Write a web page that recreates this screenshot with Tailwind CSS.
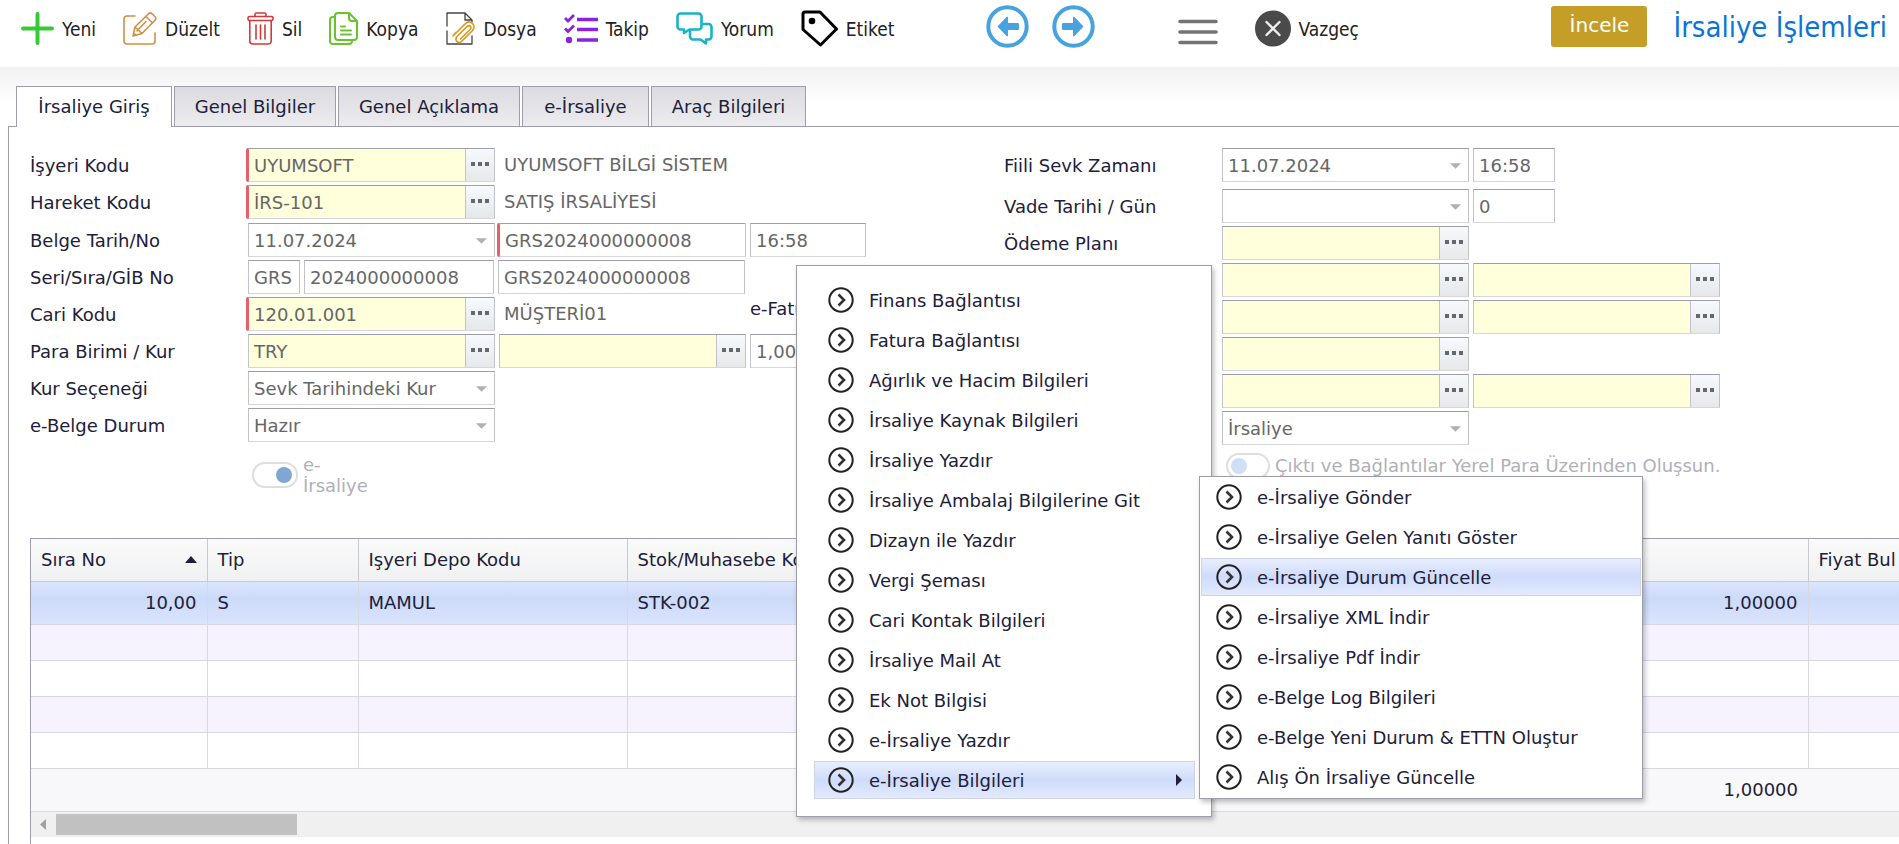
<!DOCTYPE html>
<html lang="tr">
<head>
  <meta charset="utf-8">
  <meta name="viewport" content="width=device-width, initial-scale=1">
  <title>İrsaliye İşlemleri</title>
  <script src="https://cdn.jsdelivr.net/npm/@tailwindcss/browser@4"></script>
</head>
<body class="bg-white font-['DejaVu_Sans',sans-serif] text-lg leading-6 text-[#20203a] overflow-x-hidden">

  <!-- shared icons -->
  <svg class="hidden" xmlns="http://www.w3.org/2000/svg">
    <symbol id="go" viewBox="0 0 26 26">
      <circle cx="13" cy="13" r="11.7" fill="none" stroke="#222" stroke-width="2"/>
      <path d="M10.5 7.5l5.5 5.5-5.5 5.5" fill="none" stroke="#333" stroke-width="2.6"/>
    </symbol>
    <symbol id="dots" viewBox="0 0 18 4">
      <path d="M0 0h4v4H0zM7 0h4v4H7zM14 0h4v4h-4z" fill="#62686f"/>
    </symbol>
    <symbol id="caret" viewBox="0 0 12 6">
      <path d="M0 0h12L6 6z" fill="#b0b0b6"/>
    </symbol>
  </svg>

  <div class="min-h-screen flex flex-col relative">

    <!-- toolbar -->
    <header class="h-[67px] flex items-center pl-[21px] pr-3 pb-[10px] bg-white font-['DejaVu_Sans_Condensed','DejaVu_Sans',sans-serif] text-[19px] text-[#222]">
      <div class="flex items-center gap-[27px]">
        <button class="flex items-center gap-2">
          <svg class="w-[33px] h-[33px]" viewBox="0 0 33 33" fill="none" stroke="#38c938" stroke-width="4" stroke-linecap="round"><path d="M16.5 2v29M2 16.5h29"/></svg>
          Yeni
        </button>
        <button class="flex items-center gap-2">
          <svg class="w-[34px] h-[33px]" viewBox="0 0 34 33" fill="none" stroke="#cf8f45" stroke-width="1.6" stroke-linejoin="round" stroke-linecap="round"><path d="M12 4H4a3 3 0 0 0-3 3v22a3 3 0 0 0 3 3h25a3 3 0 0 0 3-3V21"/><path d="M10 24l2-9L25.500 1.800a2.500 2.500 0 0 1 3.500 0l3 3a2.500 2.500 0 0 1 0 3.500L19 21.500zM12 15l7 6.500M23 4.500l6.500 6.500M14 19l9-9.500M10.500 21l2.500 2.200"/></svg>
          Düzelt
        </button>
        <button class="flex items-center gap-2">
          <svg class="w-[27px] h-[33px]" viewBox="0 0 27 33" fill="none" stroke="#cf3b3b" stroke-width="1.600" stroke-linejoin="round" stroke-linecap="round"><path d="M8 4V2.500A1.500 1.500 0 0 1 9.500 1h8A1.500 1.500 0 0 1 19 2.500V4"/><rect x="1" y="4.500" width="25" height="4" rx="1.500"/><path d="M2.800 9v20a3 3 0 0 0 3 3h15.400a3 3 0 0 0 3-3V9M9 13v14M13.500 13v14M18 13v14"/></svg>
          Sil
        </button>
        <button class="flex items-center gap-2">
          <svg class="w-[29px] h-[33px]" viewBox="0 0 29 33" fill="none" stroke="#6cc22e" stroke-width="2" stroke-linejoin="round" stroke-linecap="round"><path d="M20 1H9a3 3 0 0 0-3 3v21a3 3 0 0 0 3 3h16a3 3 0 0 0 3-3V9z"/><path d="M20 1v5a3 3 0 0 0 3 3h5M6 5H4a3 3 0 0 0-3 3v21a3 3 0 0 0 3 3h16a3 3 0 0 0 3-3v-1M12 14.500h4M12 18.500h10M12 22.500h10"/></svg>
          Kopya
        </button>
        <button class="flex items-center gap-2">
          <svg class="w-[30px] h-[33px]" viewBox="0 0 30 33" fill="none" stroke-linejoin="round" stroke-linecap="round"><path d="M1 14V1h18l7 7v2M1 19v13h25v-8M19 1v7h7" stroke="#444" stroke-width="1.300"/><path d="M7 24L19 12c5-5 12 1 7.500 6.500L16 29c-3.500 3.500-8-.5-5-4.500L21 14.500c3-2 5 .5 3 3L14.500 27M10 20.500L7.500 23" stroke="#d99a1c" stroke-width="1.700"/></svg>
          Dosya
        </button>
        <button class="flex items-center gap-2">
          <svg class="w-[34px] h-[33px]" viewBox="0 0 34 33" fill="none" stroke="#8a22e0"><path d="M13 7.500h21M13 17.500h21M13 28h21" stroke-width="3.600"/><path d="M1 6l3 3 6-6M1 16.500l3 3 6-6" stroke-width="2.800"/><circle cx="5" cy="28" r="3.200" fill="#8a22e0" stroke="none"/></svg>
          Takip
        </button>
        <button class="flex items-center gap-2">
          <svg class="w-[37px] h-[33px]" viewBox="0 0 37 33" fill="none" stroke="#19b3c9" stroke-width="2.600" stroke-linejoin="round"><path d="M4.500 1.500h18a3 3 0 0 1 3 3v10a3 3 0 0 1-3 3h-9l-5.500 3.500v-3.500H4.500a3 3 0 0 1-3-3v-10a3 3 0 0 1 3-3z"/><path d="M26 12h6.500a3 3 0 0 1 3 3v9.500a3 3 0 0 1-3 3H30v4l-5.500-4H17a3 3 0 0 1-3-3V18"/></svg>
          Yorum
        </button>
        <button class="flex items-center gap-2">
          <svg class="w-[37px] h-[37px]" viewBox="0 0 37 37" fill="none" stroke="#000" stroke-width="3" stroke-linejoin="round"><path d="M2 4a2 2 0 0 1 2-2h15l16.500 17L19.500 35 2 19.500z"/><circle cx="11" cy="11" r="3.300" fill="#000" stroke="none"/></svg>
          Etiket
        </button>
      </div>

      <div class="flex items-center gap-[23px] ml-[91px] pb-1">
        <button aria-label="Önceki">
          <svg class="w-[43px] h-[43px]" viewBox="0 0 43 43"><circle cx="21.500" cy="21.500" r="19.200" fill="none" stroke="#48a2dd" stroke-width="4"/><path d="M11.500 21.500l9-9.500c1-.8 1.500-.2 1.500.8V18h9.500c1 0 1.500.5 1.500 1.500v4c0 1-.5 1.500-1.500 1.500H22v5.200c0 1-.5 1.600-1.500.8z" fill="#48a2dd"/></svg>
        </button>
        <button aria-label="Sonraki">
          <svg class="w-[43px] h-[43px]" viewBox="0 0 43 43"><circle cx="21.500" cy="21.500" r="19.200" fill="none" stroke="#48a2dd" stroke-width="4"/><path d="M31.500 21.500l-9-9.500c-1-.8-1.500-.2-1.500.8V18h-9.500c-1 0-1.500.5-1.500 1.500v4c0 1 .5 1.500 1.500 1.500H21v5.200c0 1 .5 1.600 1.500.8z" fill="#48a2dd"/></svg>
        </button>
      </div>

      <button class="ml-[83px] pt-[6px]" aria-label="Menü">
        <svg class="w-[40px] h-[26px]" viewBox="0 0 40 26" stroke="#737373" stroke-width="3.600" stroke-linecap="round"><path d="M2 2.500h36M2 13h36M2 23.500h36"/></svg>
      </button>

      <button class="flex items-center gap-2 ml-[37px]">
        <svg class="w-[36px] h-[37px]" viewBox="0 0 36 36"><circle cx="18" cy="18" r="18" fill="#4a4a4a"/><path d="M11.500 11.500l13 13M24.500 11.500l-13 13" stroke="#eee" stroke-width="2.400" stroke-linecap="round"/></svg>
        Vazgeç
      </button>

      <div class="flex items-center gap-[26px] ml-auto pb-1">
        <button class="w-24 h-[41px] pb-1 rounded-[3px] bg-[#c49e26] text-white text-xl font-['DejaVu_Sans',sans-serif]">İncele</button>
        <h1 class="text-[29px] leading-9 text-[#0a75d6]">İrsaliye İşlemleri</h1>
      </div>
    </header>

    <main class="grow flex flex-col pl-2 bg-linear-to-b from-[#f2f2f2] to-white to-[36px]">
      <!-- tabs -->
      <nav class="flex gap-[2px] pl-2 pt-[19px] relative">
        <a href="#" class="w-[156px] h-[41px] -mb-px relative z-10 pt-2 text-center border border-b-0 border-[#9d9dab] bg-white">İrsaliye Giriş</a>
        <a href="#" class="w-[162px] h-10 pt-2 text-center border border-b-0 border-[#9d9dab] bg-linear-to-b from-[#dcdce0] to-[#ececef]">Genel Bilgiler</a>
        <a href="#" class="w-[182px] h-10 pt-2 text-center border border-b-0 border-[#9d9dab] bg-linear-to-b from-[#dcdce0] to-[#ececef]">Genel Açıklama</a>
        <a href="#" class="w-[127px] h-10 pt-2 text-center border border-b-0 border-[#9d9dab] bg-linear-to-b from-[#dcdce0] to-[#ececef]">e-İrsaliye</a>
        <a href="#" class="w-[155px] h-10 pt-2 text-center border border-b-0 border-[#9d9dab] bg-linear-to-b from-[#dcdce0] to-[#ececef]">Araç Bilgileri</a>
      </nav>

      <section class="grow flex flex-col border-l border-t border-[#9d9dab] bg-white pl-[21px] pt-[21px]">

        <!-- .box: framed field, .look: field with lookup button, .req: required -->
        <form class="grid grid-cols-[974px_1fr] pb-10
          [&_.row]:flex [&_.row]:items-center [&_.row]:gap-1 [&_.row]:h-[34px] [&_.row>label]:w-[214px] [&_.row>label]:pt-[2px] [&_.row>label]:shrink-0
          [&_.box]:flex [&_.box]:relative [&_.box]:shrink-0 [&_.box]:h-[34px] [&_.box]:w-[247px] [&_.box]:border [&_.box]:border-[#c2c2cd] [&_.box]:border-t-[#9d9dab] [&_.box]:border-b-[#d6d6dc] [&_.box]:text-[#666]
          [&_.box>input]:w-full [&_.box>input]:min-w-0 [&_.box>input]:pl-[5px] [&_.box>input]:pt-[2px] [&_.box>select]:w-full [&_.box>select]:appearance-none [&_.box>select]:pl-[5px] [&_.box>select]:pt-[2px]
          [&_.box>svg]:absolute [&_.box>svg]:right-[7px] [&_.box>svg]:top-[14px] [&_.box>svg]:w-[11px] [&_.box>svg]:h-[6px] [&_.box>svg]:pointer-events-none
          [&_.look>input]:bg-[#ffffdc]
          [&_.look>button]:w-[29px] [&_.look>button]:shrink-0 [&_.look>button]:flex [&_.look>button]:justify-center [&_.look>button]:pt-[13px] [&_.look>button]:border-l [&_.look>button]:border-[#c2c2cd] [&_.look>button]:bg-linear-to-b [&_.look>button]:from-[#f6f9fd] [&_.look>button]:to-[#e6e8ea]
          [&_.look>button>svg]:w-[18px] [&_.look>button>svg]:h-1
          [&_.req]:border-l-[#e5606c] [&_.req]:rounded-l-[2px] [&_.req]:shadow-[-2px_0_0_#e5606c]
          [&_output]:pl-[5px] [&_output]:text-[#666]">

          <div class="flex flex-col gap-[3px]">
            <div class="row">
              <label for="isyeri">İşyeri Kodu</label>
              <div class="box look req"><input id="isyeri" value="UYUMSOFT"><button type="button" aria-label="Seç"><svg><use href="#dots"/></svg></button></div>
              <output>UYUMSOFT BİLGİ SİSTEM</output>
            </div>
            <div class="row mb-px">
              <label for="hareket">Hareket Kodu</label>
              <div class="box look req"><input id="hareket" value="İRS-101"><button type="button" aria-label="Seç"><svg><use href="#dots"/></svg></button></div>
              <output>SATIŞ İRSALİYESİ</output>
            </div>
            <div class="row">
              <label for="belge">Belge Tarih/No</label>
              <div class="box"><select id="belge"><option>11.07.2024</option></select><svg><use href="#caret"/></svg></div>
              <div class="box req"><input aria-label="Belge No" value="GRS2024000000008"></div>
              <div class="box max-w-[116px]"><input aria-label="Belge Saati" value="16:58"></div>
            </div>
            <div class="row">
              <label for="seri">Seri/Sıra/GİB No</label>
              <div class="box max-w-[52px]"><input id="seri" value="GRS"></div>
              <div class="box max-w-[190px]"><input aria-label="Sıra" value="2024000000008"></div>
              <div class="box"><input aria-label="GİB No" value="GRS2024000000008"></div>
            </div>
            <div class="row">
              <label for="cari">Cari Kodu</label>
              <div class="box look req"><input id="cari" value="120.01.001"><button type="button" aria-label="Seç"><svg><use href="#dots"/></svg></button></div>
              <output class="w-[247px]">MÜŞTERİ01</output>
              <span class="pb-[10px]">e-Fatura</span>
            </div>
            <div class="row">
              <label for="para">Para Birimi / Kur</label>
              <div class="box look"><input id="para" value="TRY"><button type="button" aria-label="Seç"><svg><use href="#dots"/></svg></button></div>
              <div class="box look"><input aria-label="Kur Tipi"><button type="button" aria-label="Seç"><svg><use href="#dots"/></svg></button></div>
              <div class="box max-w-[116px]"><input aria-label="Kur" value="1,00000"></div>
            </div>
            <div class="row">
              <label for="kur">Kur Seçeneği</label>
              <div class="box"><select id="kur"><option>Sevk Tarihindeki Kur</option></select><svg><use href="#caret"/></svg></div>
            </div>
            <div class="row">
              <label for="durum">e-Belge Durum</label>
              <div class="box"><select id="durum"><option>Hazır</option></select><svg><use href="#caret"/></svg></div>
            </div>
            <div class="flex items-center gap-[5px] pl-[222px] pt-[9px] pb-[2px] text-[#b0b0b8]">
              <input id="eirs" type="checkbox" checked disabled class="appearance-none w-[46px] h-[26px] border-2 border-[#dedede] rounded-full flex items-center justify-end px-[4px] before:w-4 before:h-4 before:rounded-full before:bg-[#80a6d3]">
              <label for="eirs" class="leading-[21px]">e-<br>İrsaliye</label>
            </div>
          </div>

          <div class="flex flex-col gap-[3px]">
            <div class="row mb-1">
              <label for="fiili">Fiili Sevk Zamanı</label>
              <div class="box"><select id="fiili"><option>11.07.2024</option></select><svg><use href="#caret"/></svg></div>
              <div class="box max-w-[82px]"><input aria-label="Sevk Saati" value="16:58"></div>
            </div>
            <div class="row">
              <label for="vade">Vade Tarihi / Gün</label>
              <div class="box"><select id="vade"><option></option></select><svg><use href="#caret"/></svg></div>
              <div class="box max-w-[82px]"><input aria-label="Gün" value="0"></div>
            </div>
            <div class="row">
              <label for="odeme">Ödeme Planı</label>
              <div class="box look"><input id="odeme"><button type="button" aria-label="Seç"><svg><use href="#dots"/></svg></button></div>
            </div>
            <div class="row pl-[218px]">
              <div class="box look"><input aria-label="Kod 1"><button type="button" aria-label="Seç"><svg><use href="#dots"/></svg></button></div>
              <div class="box look"><input aria-label="Kod 2"><button type="button" aria-label="Seç"><svg><use href="#dots"/></svg></button></div>
            </div>
            <div class="row pl-[218px]">
              <div class="box look"><input aria-label="Kod 3"><button type="button" aria-label="Seç"><svg><use href="#dots"/></svg></button></div>
              <div class="box look"><input aria-label="Kod 4"><button type="button" aria-label="Seç"><svg><use href="#dots"/></svg></button></div>
            </div>
            <div class="row pl-[218px]">
              <div class="box look"><input aria-label="Kod 5"><button type="button" aria-label="Seç"><svg><use href="#dots"/></svg></button></div>
            </div>
            <div class="row pl-[218px]">
              <div class="box look"><input aria-label="Kod 6"><button type="button" aria-label="Seç"><svg><use href="#dots"/></svg></button></div>
              <div class="box look"><input aria-label="Kod 7"><button type="button" aria-label="Seç"><svg><use href="#dots"/></svg></button></div>
            </div>
            <div class="row pl-[218px]">
              <div class="box"><select aria-label="Tip"><option>İrsaliye</option></select><svg><use href="#caret"/></svg></div>
            </div>
            <div class="flex items-center gap-[5px] pl-[222px] pt-[5px] text-[#b0b0b8]">
              <input id="yerel" type="checkbox" disabled class="appearance-none w-[44px] h-[26px] border-2 border-[#dedede] rounded-full flex items-center px-[3px] before:w-4 before:h-4 before:rounded-full before:bg-[#cfdff5]">
              <label for="yerel">Çıktı ve Bağlantılar Yerel Para Üzerinden Oluşsun.</label>
            </div>
          </div>
        </form>

        <!-- lines -->
        <div class="grow border-l border-t border-[#9d9dab] overflow-hidden">
          <table class="table-fixed w-[2030px] border-collapse
            [&_th]:font-normal [&_th]:text-left [&_th]:px-[10px] [&_td]:px-[10px]
            [&_th]:border-r [&_th]:border-b [&_th]:border-[#c9c9d2] [&_td]:border-b [&_td]:border-[#d8d8e0] [&_tbody_td]:border-r">
            <colgroup>
              <col class="w-[176px]"><col class="w-[151px]"><col class="w-[269px]"><col class="w-[300px]"><col class="w-[881px]"><col>
            </colgroup>
            <thead>
              <tr class="h-[42px] bg-linear-to-b from-[#fafafa] to-[#f0f1f2]">
                <th><span class="flex items-center justify-between">Sıra No <svg class="w-3 h-[7px]" viewBox="0 0 12 7"><path d="M0 7h12L6 0z" fill="#20203a"/></svg></span></th>
                <th>Tip</th>
                <th>Işyeri Depo Kodu</th>
                <th>Stok/Muhasebe Kodu</th>
                <th></th>
                <th>Fiyat Bul</th>
              </tr>
            </thead>
            <tbody>
              <tr class="h-[43px] bg-linear-to-b from-[#dce6fe] via-[#ccdaf9] to-[#d9e4fd] via-40%">
                <td class="text-right">10,00</td><td>S</td><td>MAMUL</td><td>STK-002</td><td class="text-right">1,00000</td><td></td>
              </tr>
              <tr class="h-9 bg-[#f6f3fe]"><td></td><td></td><td></td><td></td><td></td><td></td></tr>
              <tr class="h-9"><td></td><td></td><td></td><td></td><td></td><td></td></tr>
              <tr class="h-9 bg-[#f6f3fe]"><td></td><td></td><td></td><td></td><td></td><td></td></tr>
              <tr class="h-9"><td></td><td></td><td></td><td></td><td></td><td></td></tr>
            </tbody>
            <tfoot>
              <tr class="h-[43px] bg-[#f8f8fb]"><td colspan="4"></td><td class="text-right">1,00000</td><td></td></tr>
            </tfoot>
          </table>
          <div class="h-[25px] bg-[#f0f0f0] flex items-center gap-[10px] pl-[9px]">
            <svg class="w-[6px] h-[11px]" viewBox="0 0 6 11"><path d="M6 0v11L0 5.500z" fill="#a0a0a0"/></svg>
            <div class="w-[241px] h-[21px] bg-[#c1c1c1]"></div>
          </div>
        </div>
      </section>
    </main>

    <!-- context menu -->
    <div id="menu" class="absolute z-20 left-[796px] top-[265px] w-[416px] bg-white border border-[#9d9dab] shadow-[2px_3px_5px_rgba(0,0,0,0.25)] pl-[17px] pr-4 pt-[15px] pb-[17px] flex flex-col gap-[2px]"></div>
    <div id="submenu" class="absolute z-30 left-[1199px] top-[476px] w-[444px] bg-white border border-[#9d9dab] shadow-[2px_3px_5px_rgba(0,0,0,0.25)] px-px pt-px pb-[2px] flex flex-col gap-[2px]"></div>
  </div>

  <script>
    const menu = [
      'Finans Bağlantısı', 'Fatura Bağlantısı', 'Ağırlık ve Hacim Bilgileri', 'İrsaliye Kaynak Bilgileri',
      'İrsaliye Yazdır', 'İrsaliye Ambalaj Bilgilerine Git', 'Dizayn ile Yazdır', 'Vergi Şeması',
      'Cari Kontak Bilgileri', 'İrsaliye Mail At', 'Ek Not Bilgisi', 'e-İrsaliye Yazdır', 'e-İrsaliye Bilgileri'
    ]
    const submenu = [
      'e-İrsaliye Gönder', 'e-İrsaliye Gelen Yanıtı Göster', 'e-İrsaliye Durum Güncelle', 'e-İrsaliye XML İndir',
      'e-İrsaliye Pdf İndir', 'e-Belge Log Bilgileri', 'e-Belge Yeni Durum &amp; ETTN Oluştur', 'Alış Ön İrsaliye Güncelle'
    ]
    const on = 'border-[#cfd3e2] bg-linear-to-b from-[#e8eefe] via-[#cfdbfa] to-[#e2eafe]'
    const arrow = '<svg class="w-[6px] h-3 ml-auto" viewBox="0 0 6 12"><path d="M0 0v12l6-6z" fill="#20203a"/></svg>'

    function draw(id, items, active, pad, end) {
      document.getElementById(id).innerHTML = items.map((text, i) => `
        <button class="h-[38px] flex items-center gap-[15px] border ${pad} ${i === active ? on : 'border-transparent'}">
          <svg class="w-[26px] h-[26px]"><use href="#go"/></svg><span class="pt-[2px]">${text}</span>${i === active ? end : ''}
        </button>`).join('')
    }
    draw('menu', menu, 12, 'pl-[13px] pr-3', arrow)
    draw('submenu', submenu, 2, 'pl-[14px] pr-3', '')
  </script>
</body>
</html>
